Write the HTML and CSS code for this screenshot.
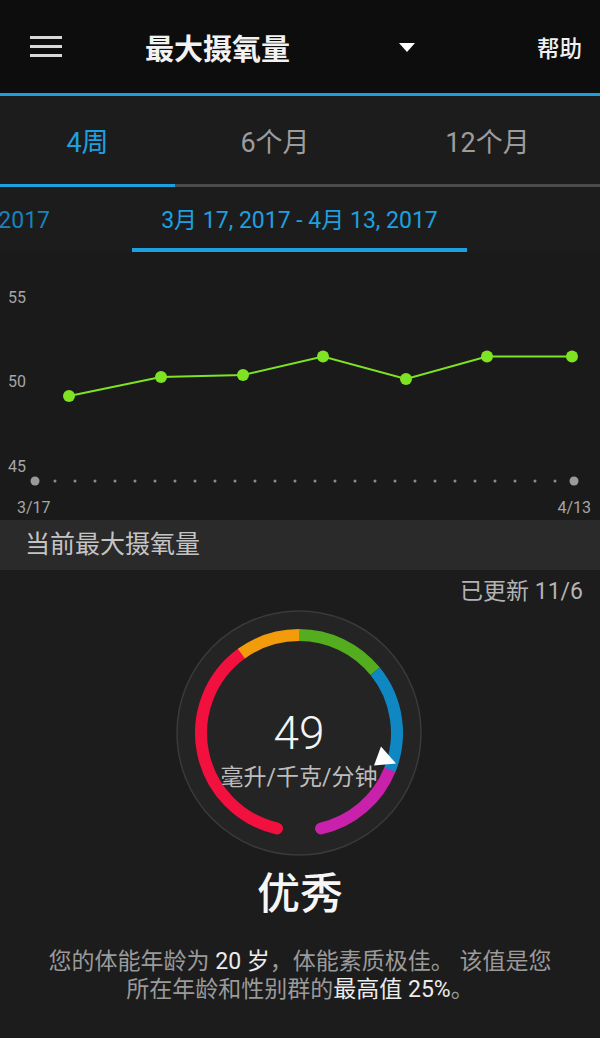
FILE: index.html
```html
<!DOCTYPE html>
<html lang="zh-CN">
<head>
	<meta charset="UTF-8">
	<title>最大摄氧量</title>
	<link rel="stylesheet" href="styles.css">
</head>
<body>
<header class="topbar">
	<div class="menu"><span></span><span></span><span></span></div>
	<h1 class="title">最大摄氧量</h1>
	<span class="caret"></span>
	<span class="help">帮助</span>
</header>

<nav class="tabs">
	<div class="tab active">4周</div>
	<div class="tab">6个月</div>
	<div class="tab">12个月</div>
</nav>
<div class="tab-track"><div class="tab-indicator"></div></div>

<div class="ranges">
	<div class="range prev"><span>2017</span></div>
	<div class="range current">3月 17, 2017 - 4月 13, 2017</div>
</div>

<!-- 차트 영역 -->
<svg class="chart" width="600" height="268" viewBox="0 0 600 268">
	<text class="axis" x="8" y="51">55</text>
	<text class="axis" x="8" y="135">50</text>
	<text class="axis" x="8" y="220">45</text>

	<circle class="end-dot" cx="35" cy="229" r="4.5"/>
	<line class="tick-dots" x1="55" y1="229" x2="556" y2="229"/>
	<circle class="end-dot" cx="574" cy="229" r="4.5"/>

	<text class="axis" x="17" y="261">3/17</text>
	<text class="axis" x="591" y="261" text-anchor="end">4/13</text>

	<polyline class="series" points="69,144 161,125 243,123 323,104.5 406,127 487,104.5 572,104.5"/>
	<g class="points">
		<circle cx="69" cy="144" r="6"/>
		<circle cx="161" cy="125" r="6"/>
		<circle cx="243" cy="123" r="6"/>
		<circle cx="323" cy="104.5" r="6"/>
		<circle cx="406" cy="127" r="6"/>
		<circle cx="487" cy="104.5" r="6"/>
		<circle cx="572" cy="104.5" r="6"/>
	</g>
</svg>

<div class="section-head">当前最大摄氧量</div>

<main class="current">
	<div class="updated">已更新 11/6</div>

	<!-- 게이지 -->
	<svg class="gauge" width="250" height="250" viewBox="0 0 250 250">
		<circle class="dial" cx="125" cy="125" r="122"/>
		<path class="arc red" d="M102.95 220.49 A98 98 0 0 1 67.40 45.72"/>
		<path class="arc magenta" d="M215.86 161.71 A98 98 0 0 1 147.05 220.49"/>
		<path class="arc flat orange" d="M67.40 45.72 A98 98 0 0 1 125 27"/>
		<path class="arc flat green" d="M125 27 A98 98 0 0 1 201.16 63.33"/>
		<path class="arc flat blue" d="M201.16 63.33 A98 98 0 0 1 215.86 161.71"/>
		<text class="value" x="125" y="141">49</text>
		<text class="unit" x="125" y="177" textLength="157" lengthAdjust="spacing">毫升/千克/分钟</text>
		<polygon class="pointer" points="207,138.5 222,155.5 200,157.5"/>
	</svg>

	<div class="rating">优秀</div>
	<p class="summary">您的体能年龄为 <b>20 岁</b>，体能素质极佳。 该值是您<br>所在年龄和性别群的<b>最高值 25%</b>。</p>
</main>
</body>
</html>
```

FILE: styles.css
```css
body{
	margin: 0;
	background-color: #1c1c1c;
	font-family: Roboto, "Noto Sans CJK SC", sans-serif;
	color: #eee;
}

/* 상단 바 */
.topbar{
	display: flex;
	align-items: center;
	height: 93px;
	padding: 0 18px 0 30px;
	background-color: #0d0d0d;
	border-bottom: 3px solid #1c9fdf;
}
.menu{
	display: flex;
	flex-direction: column;
	gap: 6px;
	width: 32px;
}
.menu span{
	height: 3px;
	background-color: #d8d8d8;
}
.title{
	flex: 1;
	margin: 0 0 0 83px;
	font-size: 29px;
	font-weight: 700;
	color: #f2f2f2;
}
.caret{
	width: 0;
	height: 0;
	border-left: 8.5px solid transparent;
	border-right: 8.5px solid transparent;
	border-top: 9px solid #fff;
	margin-top: 2px;
}
.help{
	margin-left: 122px;
	font-size: 22.5px;
	font-weight: 500;
	color: #f0f0f0;
}

/* 탭 */
.tabs{
	display: grid;
	grid-template-columns: 175px 200px 225px;
	height: 88px;
	align-items: center;
	text-align: center;
	font-size: 27px;
	color: #9c9c9c;
}
.tab.active{
	color: #1ea0e0;
}
.tab-track{
	height: 3px;
	background-color: #4b4b4b;
}
.tab-indicator{
	width: 175px;
	height: 3px;
	background-color: #1ea0e0;
}

/* 기간 선택 */
.ranges{
	display: flex;
	height: 65px;
	overflow: hidden;
	font-size: 23px;
	white-space: nowrap;
}
.range{
	padding-top: 16px;
	line-height: 36px;
}
.range.prev{
	display: flex;
	justify-content: flex-end;
	width: 50px;
	overflow: hidden;
	color: #1883bb;
}
.range.current{
	width: 335px;
	margin-left: 82px;
	padding-bottom: 9px;
	text-align: center;
	color: #1ea0e0;
	border-bottom: 4px solid #1ea0e0;
}

/* 차트 */
.chart{
	display: block;
	background-color: #1a1a1a;
}
.chart .axis{
	font-size: 16px;
	fill: #a6a6a6;
}
.end-dot{
	fill: #9a9a9a;
}
.tick-dots{
	stroke: #8c8c8c;
	stroke-width: 3;
	stroke-linecap: round;
	stroke-dasharray: 0 20;
}
.series{
	fill: none;
	stroke: #7ee322;
	stroke-width: 2;
}
.points circle{
	fill: #7ee322;
}

.section-head{
	height: 50px;
	line-height: 50px;
	padding-left: 25px;
	background-color: #2a2a2a;
	font-size: 25px;
	color: #c4c4c4;
}

/* 현재 값 */
.current{
	display: flex;
	flex-direction: column;
	align-items: center;
}
.updated{
	align-self: flex-end;
	padding: 8px 17px 0 0;
	line-height: 28px;
	font-size: 23px;
	color: #b3b3b3;
}
.gauge{
	display: block;
	margin: 2px 2px 0 0;
}
.dial{
	fill: #242424;
	stroke: #3a3a3a;
	stroke-width: 1.5;
}
.arc{
	fill: none;
	stroke-width: 12;
	stroke-linecap: round;
}
.arc.flat{
	stroke-linecap: butt;
}
.red{ stroke: #f2103e; }
.magenta{ stroke: #c921ab; }
.orange{ stroke: #f29c0c; }
.green{ stroke: #53ad1f; }
.blue{ stroke: #0f87c2; }
.pointer{
	fill: #fff;
}
.value{
	font-size: 46px;
	font-weight: 300;
	fill: #f4f4f4;
	text-anchor: middle;
}
.unit{
	font-size: 23px;
	fill: #bdbdbd;
	text-anchor: middle;
}

.rating{
	margin-top: 8px;
	line-height: 56px;
	font-size: 43px;
	font-weight: 500;
	color: #f6f6f6;
}
.summary{
	margin: 26px 0 0;
	line-height: 28px;
	font-size: 23px;
	text-align: center;
	color: #9a9a9a;
}
.summary b{
	font-weight: 400;
	color: #ececec;
}
```
